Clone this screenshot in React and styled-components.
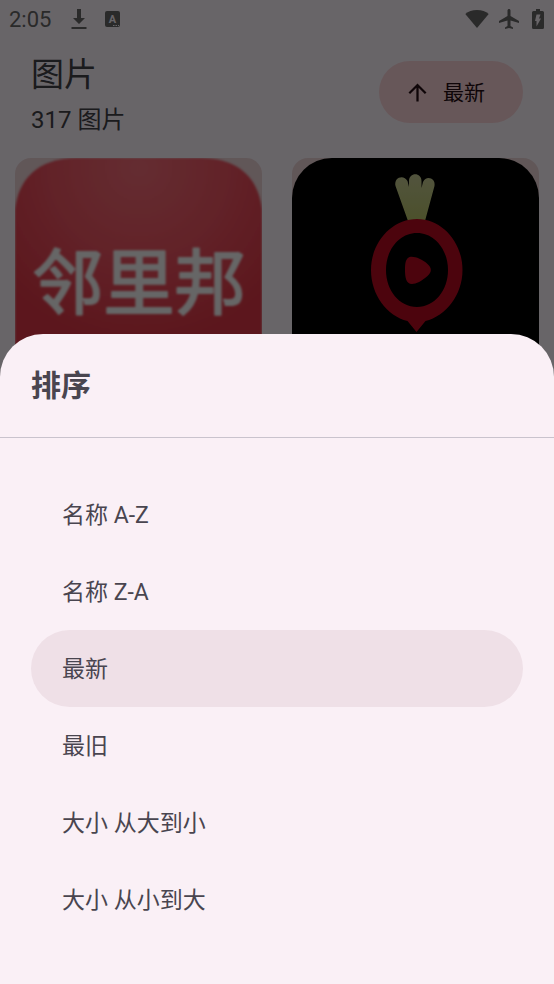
import React, { useState } from 'react';
import styled, { createGlobalStyle } from 'styled-components';
import { MdArrowUpward, MdAirplanemodeActive } from 'react-icons/md';

const GlobalStyle = createGlobalStyle`
  * { box-sizing: border-box; }
  body {
    margin: 0;
    background: #f8f0f8;
    font-family: Roboto, "Noto Sans CJK SC", sans-serif;
  }
  h1, h2, p { margin: 0; font-weight: 400; }
  button { font: inherit; border: 0; cursor: pointer; }
`;

const Page = styled.div`
  height: 100vh;
  overflow: hidden;
  background: #f8f0f8;
  color: #404047;
`;

const StatusBar = styled.div`
  display: flex;
  align-items: center;
  justify-content: space-between;
  height: 38px;
  padding: 0 10px 0 9px;
  color: #646464;
`;

const StatusGroup = styled.div`
  display: flex;
  align-items: center;
  gap: ${({ $gap }) => $gap}px;
`;

const Clock = styled.time`
  font-size: 22px;
  line-height: 24px;
  padding-top: 2px;
`;

const Header = styled.header`
  display: flex;
  align-items: center;
  justify-content: space-between;
  height: 108px;
  padding: 0 31px;
`;

const Heading = styled.div`
  display: flex;
  flex-direction: column;
  padding-top: 6px;
`;

const Title = styled.h1`
  font-size: 33px;
  line-height: 50px;
`;

const Count = styled.p`
  font-size: 24px;
  line-height: 40px;
`;

const SortButton = styled.button`
  display: flex;
  align-items: center;
  gap: 12px;
  height: 62px;
  padding: 0 38px 0 25px;
  border-radius: 31px;
  background: #f5cfd4;
  color: #240e13;
  font-size: 21px;
  line-height: 30px;
`;

const SortLabel = styled.span`
  padding-top: 2px;
`;

const Gallery = styled.main`
  display: grid;
  grid-template-columns: 1fr 1fr;
  gap: 30px;
  padding: 12px 15px;
`;

const Card = styled.div`
  aspect-ratio: 1;
  overflow: hidden;
  border-radius: 16px;
  background: #e7cfd2;

  svg { display: block; width: 100%; height: 100%; }
`;

const Scrim = styled.div`
  position: fixed;
  inset: 0;
  background: rgba(0, 0, 0, 0.58);
`;

const Sheet = styled.section`
  position: fixed;
  left: 0;
  right: 0;
  bottom: 0;
  border-radius: 43px 43px 0 0;
  background: #faf0f6;
  color: #49454f;
`;

const SheetTitle = styled.h2`
  padding: 30px 31px 29px;
  border-bottom: 1px solid #c9c3cd;
  font-size: 30px;
  line-height: 44px;
  font-weight: 700;
`;

const Options = styled.div`
  display: flex;
  flex-direction: column;
  padding: 38px 31px 46px;
`;

const Option = styled.button`
  height: 77px;
  padding: 3px 31px 0;
  border-radius: 39px;
  background: ${({ $selected }) => ($selected ? '#efe0e7' : 'transparent')};
  color: inherit;
  font-size: 23px;
  line-height: 34px;
  text-align: left;
`;

const DownloadIcon = () => (
  <svg width="16" height="22" viewBox="0 0 16 22" fill="currentColor" aria-hidden="true">
    <path d="M6 1h4v9h4l-6 6-6-6h4zM.5 19h15v2H.5z" />
  </svg>
);

const KeyboardIcon = () => (
  <svg width="15" height="16" viewBox="0 0 15 16" aria-hidden="true">
    <rect width="15" height="16" rx="2" fill="currentColor" />
    <text x="7.5" y="12" textAnchor="middle" fontFamily="Roboto" fontWeight="700" fontSize="11" fill="#f8f0f8">A</text>
    <path d="M8 14.5h1.500M10.500 14.500H12M13 14.500h1" stroke="#f8f0f8" strokeWidth="1" />
  </svg>
);

const WifiIcon = () => (
  <svg width="24" height="20" viewBox="0 0 24 20" fill="currentColor" aria-hidden="true">
    <path d="M12 1C7.200 1 3.200 2.600 .3 4.900L12 19 23.700 4.900C20.800 2.600 16.800 1 12 1z" />
  </svg>
);

const BatteryIcon = () => (
  <svg width="12" height="20" viewBox="0 0 12 20" aria-hidden="true">
    <path d="M4 0h4v2h2.500Q12 2 12 3.500v15Q12 20 10.500 20h-9Q0 20 0 18.500v-15Q0 2 1.500 2H4z" fill="currentColor" />
    <path d="M4.500 5.500h4L7 9.500h2L4.500 17.500V12H3z" fill="#f8f0f8" />
  </svg>
);

const NeighbourLogo = () => (
  <svg viewBox="0 0 247 247" role="img" aria-label="邻里邦">
    <defs>
      <radialGradient id="glow" gradientUnits="userSpaceOnUse" cx="124" cy="10" r="175">
        <stop offset="0" stopColor="#f06b76" />
        <stop offset="0.5" stopColor="#e95260" />
        <stop offset="1" stopColor="#db3645" />
      </radialGradient>
      <filter id="soft">
        <feGaussianBlur stdDeviation="0.8" />
      </filter>
    </defs>
    <path d="M0 247V52C3 22 22 0 62 0H186C225 0 244 22 247 52V247z" fill="url(#glow)" filter="url(#soft)" />
    <text
      x="124"
      y="150"
      textAnchor="middle"
      fontFamily="Noto Sans CJK SC, sans-serif"
      fontWeight="400"
      fontSize="71"
      fill="#f3f3f3"
      stroke="#f3f3f3"
      strokeWidth="2"
      strokeLinejoin="round"
      filter="url(#soft)"
    >
      邻里邦
    </text>
  </svg>
);

const RadishLogo = () => (
  <svg viewBox="0 0 247 247" aria-hidden="true">
    <defs>
      <linearGradient id="leaf" x1="0" y1="0" x2="0" y2="1">
        <stop offset="0" stopColor="#c3c893" />
        <stop offset="1" stopColor="#b5c068" />
      </linearGradient>
    </defs>
    <rect width="247" height="262" rx="40" fill="#000" />
    <path
      d="M116 63L103.500 28C101.500 19 112 16 115.500 23L117 29V23C117 14 129.500 14 129.500 23V30L131 24C134 17 144 20 142.500 28L133 63z"
      fill="url(#leaf)"
    />
    <path
      fillRule="evenodd"
      fill="#b50a21"
      d="M125 61C150 61 170.500 84 170.500 112C170.500 137 154 158 133.500 163L124.500 174L115.500 163C95 158 79 137 79 112C79 84 100 61 125 61zM125 75C107.500 75 94 91.500 94 112C94 132.500 107.500 149 125 149C142.500 149 156 132.500 156 112C156 91.500 142.500 75 125 75z"
    />
    <path d="M116 100C119 97 129 100 135.500 106C140 110 140 114 135.500 118C130 123 124 126 120 126C114 126 113 119 113 112C113 106 113.500 102 116 100z" fill="#b50a21" />
  </svg>
);

const SORTS = ['名称 A-Z', '名称 Z-A', '最新', '最旧', '大小 从大到小', '大小 从小到大'];

export default function App() {
  const [selected, setSelected] = useState('最新');

  return (
    <>
      <GlobalStyle />
      <Page>
        <StatusBar>
          <StatusGroup $gap={20}>
            <Clock>2:05</Clock>
            <StatusGroup $gap={18}>
              <DownloadIcon />
              <KeyboardIcon />
            </StatusGroup>
          </StatusGroup>
          <StatusGroup $gap={11}>
            <StatusGroup $gap={8}>
              <WifiIcon />
              <MdAirplanemodeActive size={24} />
            </StatusGroup>
            <BatteryIcon />
          </StatusGroup>
        </StatusBar>
        <Header>
          <Heading>
            <Title>图片</Title>
            <Count>317 图片</Count>
          </Heading>
          <SortButton type="button">
            <MdArrowUpward size={27} />
            <SortLabel>{selected}</SortLabel>
          </SortButton>
        </Header>
        <Gallery>
          <Card><NeighbourLogo /></Card>
          <Card><RadishLogo /></Card>
        </Gallery>
      </Page>
      <Scrim />
      <Sheet role="dialog" aria-labelledby="sort-title">
        <SheetTitle id="sort-title">排序</SheetTitle>
        <Options>
          {SORTS.map((name) => (
            <Option
              key={name}
              type="button"
              $selected={name === selected}
              aria-pressed={name === selected}
              onClick={() => setSelected(name)}
            >
              {name}
            </Option>
          ))}
        </Options>
      </Sheet>
    </>
  );
}
